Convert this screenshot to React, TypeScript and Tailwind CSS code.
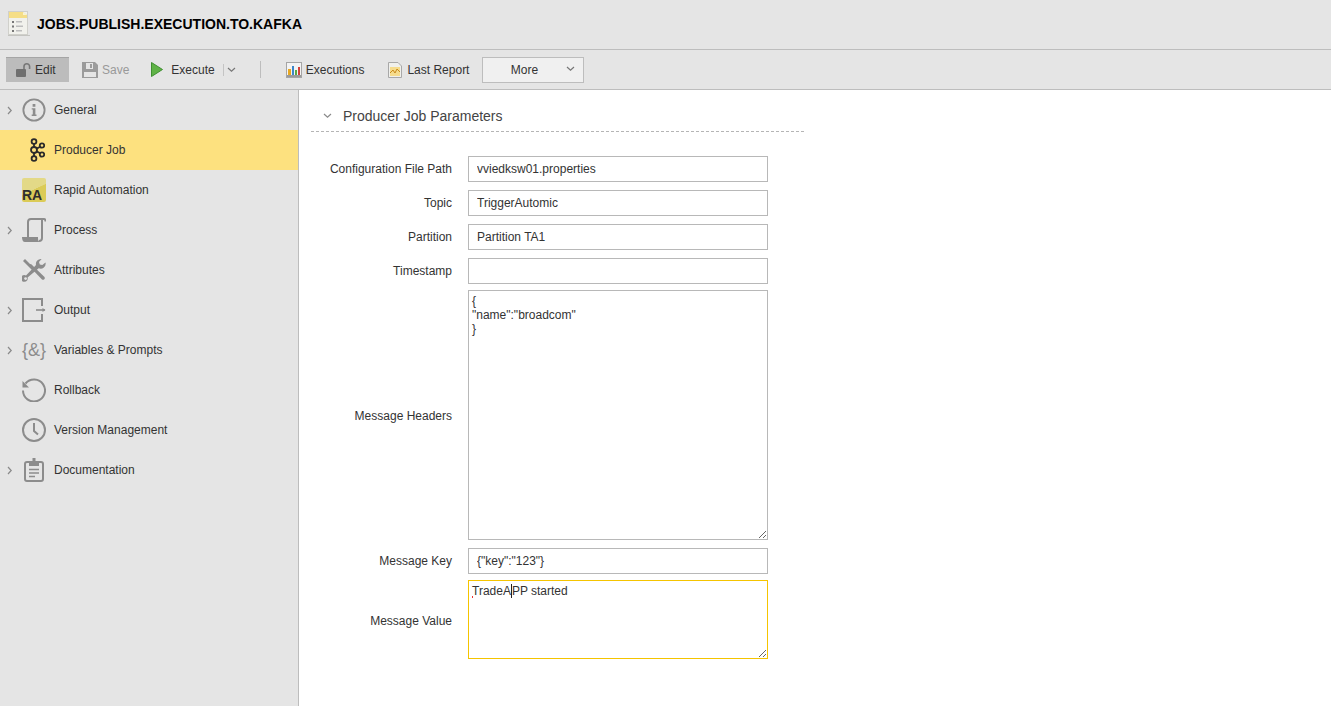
import type { ReactNode } from 'react';

const grey = '#8c8c8c';

function Chevron({ className = '' }: { className?: string }) {
  return (
    <svg width="9" height="9" viewBox="0 0 9 9" className={className} fill="none" stroke="#8a8a8a" strokeWidth="1.2">
      <path d="M3 1l3.2 3.5L3 8" />
    </svg>
  );
}

function ChevronDown({ color = '#777' }: { color?: string }) {
  return (
    <svg width="9" height="6" viewBox="0 0 9 6" fill="none" stroke={color} strokeWidth="1.2">
      <path d="M1 1l3.5 3.2L8 1" />
    </svg>
  );
}

function JobIcon() {
  return (
    <svg width="22" height="26" viewBox="0 0 22 26">
      <rect x="0.5" y="0.5" width="19" height="23" fill="#f1f1ec" stroke="#d0d0cb" />
      <path d="M1 1h14l4 3v3H1z" fill="#f5de86" />
      <path d="M15 1v3h4z" fill="#faf3d0" />
      <rect x="0" y="24" width="22" height="1" fill="#c4c4c0" />
      <g fill="#777">
        <rect x="4" y="10" width="2" height="2" />
        <rect x="4" y="14.5" width="2" height="2" />
        <rect x="4" y="19" width="2" height="2" />
      </g>
      <g fill="#bdbdbd">
        <rect x="8" y="10" width="6" height="1.5" />
        <rect x="8" y="14.5" width="7" height="1.5" />
        <rect x="8" y="19" width="6" height="1.5" />
      </g>
    </svg>
  );
}

function LockIcon() {
  return (
    <svg width="15" height="16" viewBox="0 0 15 16">
      <path d="M8 7V4.5a2.8 2.8 0 0 1 5.6 0V7" fill="none" stroke="#777" strokeWidth="1.6" />
      <rect x="0" y="7" width="10" height="8" rx="1" fill="#6f6f6f" />
    </svg>
  );
}

function SaveIcon() {
  return (
    <svg width="16" height="16" viewBox="0 0 16 16">
      <path d="M0 0h13l3 3v13H0z" fill="#9b9b9b" />
      <rect x="4" y="1" width="7" height="6" fill="#e5e5e5" />
      <rect x="8" y="2" width="2" height="4" fill="#9b9b9b" />
      <rect x="2" y="10" width="12" height="5" fill="#e5e5e5" />
    </svg>
  );
}

function PlayIcon() {
  return (
    <svg width="12" height="15" viewBox="0 0 12 15">
      <path d="M0.5 0.5L11.5 7.5L0.5 14.5z" fill="#5fb246" stroke="#3f8f31" />
    </svg>
  );
}

function ChartIcon() {
  return (
    <svg width="16" height="16" viewBox="0 0 16 16">
      <rect x="0.5" y="0.5" width="15" height="15" fill="#f3f3f3" stroke="#a5a5a5" />
      <rect x="2" y="7" width="3" height="6" fill="#e8a820" />
      <rect x="6" y="4" width="2" height="9" fill="#3c86c8" />
      <rect x="9" y="8" width="2" height="5" fill="#5aa845" />
      <rect x="12" y="5" width="2" height="8" fill="#d2413a" />
      <rect x="1" y="13" width="14" height="2" fill="#9a9a9a" />
    </svg>
  );
}

function ReportIcon() {
  return (
    <svg width="14" height="16" viewBox="0 0 14 16">
      <path d="M0.5 0.5H10L13.5 4V15.5H0.5z" fill="#f0f0ec" stroke="#a8a8a8" />
      <rect x="2" y="5" width="10" height="9" fill="#f6dc8c" />
      <path d="M2 11l3-3 2 3 2-4 3 3" fill="none" stroke="#c98a1c" strokeWidth="1" />
    </svg>
  );
}

function InfoIcon() {
  return (
    <svg width="26" height="26" viewBox="0 0 26 26">
      <circle cx="13" cy="13" r="11.5" fill="none" stroke={grey} strokeWidth="2" />
      <rect x="11.5" y="6.5" width="3" height="3" fill={grey} />
      <path d="M10.5 11h4v7h1.2v1.5h-5.2V18h1.2v-5.5h-1.2z" fill={grey} />
    </svg>
  );
}

function KafkaIcon() {
  return (
    <svg width="16" height="24" viewBox="0 0 16 24" className="ml-[6px]" fill="none" stroke="#2a2a2a" strokeWidth="1.8">
      <circle cx="5" cy="3.5" r="2.4" />
      <circle cx="5" cy="12" r="3" />
      <circle cx="5" cy="20.5" r="2.4" />
      <circle cx="13" cy="7.5" r="2.2" />
      <circle cx="13" cy="16.5" r="2.2" />
      <path d="M5 6v3M5 15v3M7.6 10.6l3.6-1.8M7.6 13.4l3.6 1.8" />
    </svg>
  );
}

function RaIcon() {
  return (
    <div className="relative h-6 w-6 overflow-hidden rounded-[2px] bg-[linear-gradient(155deg,#e3d987_48%,#dbcb57_49%)]">
      <span className="absolute bottom-0 left-0 text-sm font-bold leading-[14px] text-[#2e2e2e]">RA</span>
    </div>
  );
}

function ProcessIcon() {
  return (
    <svg width="24" height="24" viewBox="0 0 24 24" fill="none" stroke={grey} strokeWidth="2">
      <path d="M6 19V4c0-2 1-3 3-3h13" />
      <path d="M22 1c1 0 1.5.8 1.5 2.5M20 2v18c0 2-1 3-3 3" />
      <path d="M0 19h16c0 2 0 4 1.5 5H3c-2 0-3-2-3-5z" fill={grey} stroke="none" />
    </svg>
  );
}

function ToolsIcon() {
  return (
    <svg width="24" height="24" viewBox="0 0 24 24" fill={grey}>
      <path d="M3 1l5.5 5.5L12 10l-2 2-3.5-3.5L1 3z" />
      <path d="M6 7L20 21.5a1.8 1.8 0 0 0 2.5-2.5L9 6z" />
      <path d="M23.5 4.5a5 5 0 0 1-6.8 5.8L5.6 19.5a3.4 3.4 0 1 1-1.6-2l10-10.5A5 5 0 0 1 19.6 1L17 4l.8 2.5 2.5.6z" />
      <circle cx="3.6" cy="20.6" r="1.4" fill="#e5e5e5" />
    </svg>
  );
}

function OutputIcon() {
  return (
    <svg width="24" height="24" viewBox="0 0 24 24" fill="none" stroke={grey} strokeWidth="2">
      <path d="M20 8V1H1v22h19v-7" />
      <path d="M14 12h9" strokeWidth="1.6" />
      <path d="M20.5 10l3 2-3 2z" fill={grey} stroke="none" />
    </svg>
  );
}

function VarsIcon() {
  return (
    <span className="block whitespace-nowrap text-lg font-normal leading-6 text-[#8c8c8c]">
      {'{&}'}
    </span>
  );
}

function RollbackIcon() {
  return (
    <svg width="24" height="24" viewBox="0 0 24 24" fill="none" stroke={grey} strokeWidth="2">
      <path d="M3.5 5.5A11 11 0 1 1 1 12.5" />
      <path d="M0.5 3v6.5H7z" fill={grey} stroke="none" />
    </svg>
  );
}

function ClockIcon() {
  return (
    <svg width="24" height="24" viewBox="0 0 24 24" fill="none" stroke={grey} strokeWidth="2">
      <circle cx="12" cy="12" r="11" />
      <path d="M12 5v8l4 3.5" />
    </svg>
  );
}

function DocIcon() {
  return (
    <svg width="20" height="24" viewBox="0 0 20 24" fill="none" stroke={grey} strokeWidth="2">
      <rect x="1" y="4" width="18" height="19" rx="2" />
      <path d="M6 4.5h8V7H6z" fill={grey} />
      <rect x="8.5" y="0" width="3" height="4" fill={grey} stroke="none" />
      <path d="M5 11.5h10M5 15h10M5 18.5h6" strokeWidth="1.6" />
    </svg>
  );
}

interface NavItem {
  label: string;
  icon: ReactNode;
  arrow?: boolean;
  active?: boolean;
}

const navItems: NavItem[] = [
  { label: 'General', icon: <InfoIcon />, arrow: true },
  { label: 'Producer Job', icon: <KafkaIcon />, active: true },
  { label: 'Rapid Automation', icon: <RaIcon /> },
  { label: 'Process', icon: <ProcessIcon />, arrow: true },
  { label: 'Attributes', icon: <ToolsIcon /> },
  { label: 'Output', icon: <OutputIcon />, arrow: true },
  { label: 'Variables & Prompts', icon: <VarsIcon />, arrow: true },
  { label: 'Rollback', icon: <RollbackIcon /> },
  { label: 'Version Management', icon: <ClockIcon /> },
  { label: 'Documentation', icon: <DocIcon />, arrow: true },
];

function Label({ children, className = '' }: { children: ReactNode; className?: string }) {
  return <div className={`w-[142px] shrink-0 text-right text-xs text-[#333] ${className}`}>{children}</div>;
}

function TextRow({ label, value, mt }: { label: string; value: string; mt: string }) {
  return (
    <div className={`flex items-center gap-4 ${mt}`}>
      <Label>{label}</Label>
      <input
        readOnly
        defaultValue={value}
        className="h-[26px] w-[300px] border border-[#b8b8b8] bg-white px-2 text-xs text-[#333] outline-none"
      />
    </div>
  );
}

export default function App() {
  return (
    <div className="flex h-[706px] w-[1331px] flex-col overflow-hidden bg-white font-['Liberation_Sans',Arial,sans-serif] text-xs text-[#333]">
      {/* title */}
      <header className="flex h-[50px] shrink-0 items-center gap-[7px] border-b border-[#bdbdbd] bg-[#e5e5e5] pb-[2px] pl-2">
        <JobIcon />
        <h1 className="text-sm font-bold text-black">JOBS.PUBLISH.EXECUTION.TO.KAFKA</h1>
      </header>

      {/* toolbar */}
      <div className="flex h-10 shrink-0 items-center border-b border-[#bdbdbd] bg-[#e5e5e5] pl-[6px]">
        <button className="flex h-[25px] w-[63px] items-center gap-[4px] border-t border-[#a5a5a5] bg-[#bcbcbc] pl-[10px]">
          <LockIcon />
          <span>Edit</span>
        </button>
        <div className="ml-[13px] flex items-center gap-1 text-[#999]">
          <SaveIcon />
          <span>Save</span>
        </div>
        <div className="ml-[22px] flex items-center">
          <PlayIcon />
          <span className="ml-2">Execute</span>
          <span className="ml-2 mr-[3px] h-3 border-l border-[#c4c4c4]" />
          <ChevronDown />
        </div>
        <div className="ml-6 h-[17px] border-l border-[#bdbdbd]" />
        <div className="ml-[25px] flex items-center gap-1">
          <ChartIcon />
          <span>Executions</span>
        </div>
        <div className="ml-6 flex items-center gap-[5px]">
          <ReportIcon />
          <span>Last Report</span>
        </div>
        <button className="relative ml-[13px] flex h-[26px] w-[102px] items-center justify-center border border-[#bdbdbd] bg-[#f0f0f0] pr-[18px]">
          More
          <span className="absolute right-[8px] top-[8px]">
            <ChevronDown />
          </span>
        </button>
      </div>

      <div className="flex min-h-0 flex-1">
        {/* sidebar */}
        <nav className="w-[299px] shrink-0 border-r border-[#bdbdbd] bg-[#e5e5e5]">
          {navItems.map((item) => (
            <div
              key={item.label}
              className={`flex h-10 items-center ${item.active ? 'bg-[#fde17f]' : ''}`}
            >
              <div className="flex w-[22px] shrink-0 justify-start pl-[5px]">
                {item.arrow && <Chevron />}
              </div>
              <div className="flex w-6 shrink-0 items-center justify-center">{item.icon}</div>
              <span className="ml-2 whitespace-nowrap">{item.label}</span>
            </div>
          ))}
        </nav>

        {/* content */}
        <main className="min-w-0 flex-1 pl-3">
          <div className="flex h-[42px] w-[493px] items-center border-b border-dashed border-[#b5b5b5] pl-3 pt-[10px]">
            <ChevronDown color="#8a8a8a" />
            <span className="ml-[11px] text-sm text-[#444]">Producer Job Parameters</span>
          </div>

          <div className="-ml-px flex flex-col">
            <TextRow label="Configuration File Path" value="vviedksw01.properties" mt="mt-6" />
            <TextRow label="Topic" value="TriggerAutomic" mt="mt-2" />
            <TextRow label="Partition" value="Partition TA1" mt="mt-2" />
            <TextRow label="Timestamp" value="" mt="mt-2" />
            <div className="mt-[6px] flex items-center gap-4">
              <Label className="pt-[2px]">Message Headers</Label>
              <textarea
                readOnly
                defaultValue={'{\n"name":"broadcom"\n}'}
                className="h-[250px] w-[300px] border border-[#b8b8b8] bg-white px-[3px] pt-[3px] text-xs leading-[14px] text-[#333] outline-none"
              />
            </div>
            <TextRow label="Message Key" value={'{"key":"123"}'} mt="mt-2" />
            <div className="mt-[6px] flex items-center gap-4">
              <Label className="pt-[2px]">Message Value</Label>
              <div className="relative h-[79px] w-[300px] resize overflow-auto border border-[#f5c400] bg-white px-[3px] pt-[3px] text-xs leading-[14px] text-[#333]">
                <span>TradeA</span>
                <span className="border-l border-[#222]">PP started</span>
                <span className="absolute left-[3px] top-[15px] h-[2px] w-px bg-[#e33]" />
              </div>
            </div>
          </div>
        </main>
      </div>
    </div>
  );
}
